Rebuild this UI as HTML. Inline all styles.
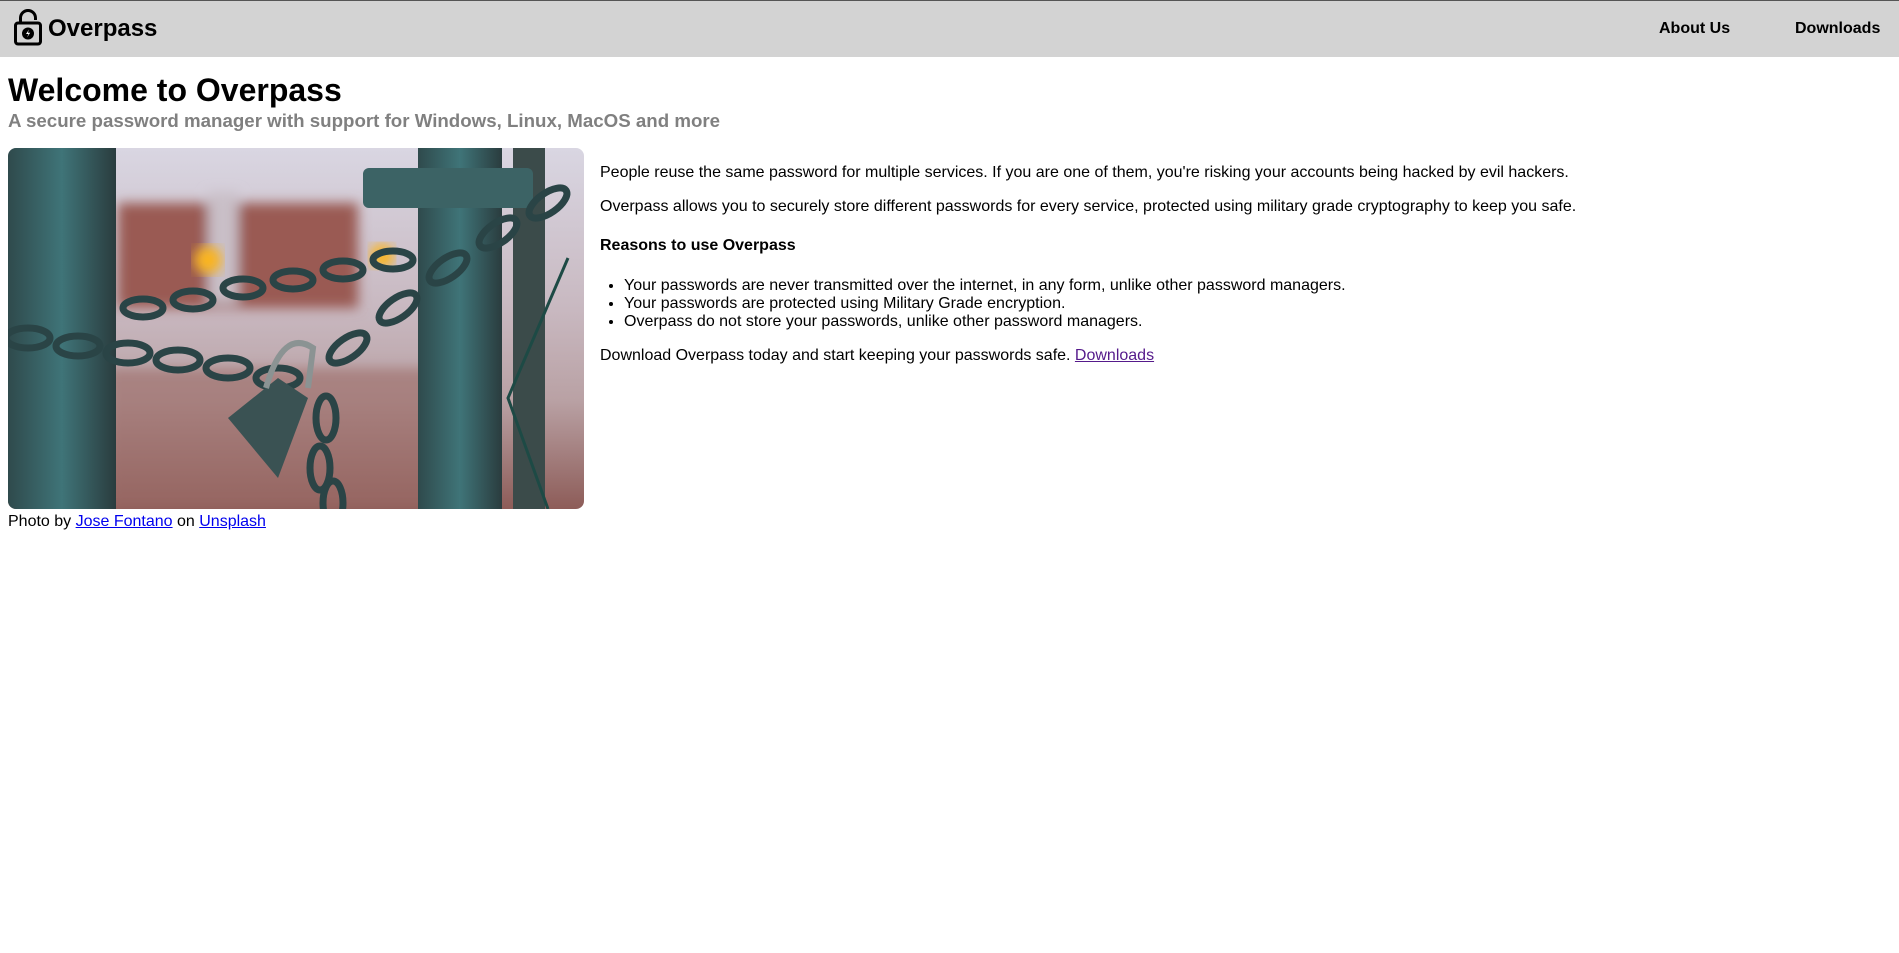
<!DOCTYPE html>
<html><head><meta charset="utf-8"><style>
*{box-sizing:border-box}
body{margin:0;width:1899px;height:953px;font-family:"Liberation Sans",Arial,sans-serif;font-size:16px;color:#000;background:#fff;position:relative;overflow:hidden}
.hdr{position:absolute;left:0;top:0;width:1899px;height:57px;background:#d3d3d3;border-top:1px solid #555}
.abs{position:absolute;white-space:nowrap}
a{color:#551a8b}
a.b{color:#0000ee}
</style></head><body>
<div class="hdr"></div>
<svg class="abs" style="left:12px;top:8px" width="32" height="40" viewBox="12 8 32 40">
<path d="M20.5 22 V18 A7.5 7.5 0 0 1 35.5 18 V20" fill="none" stroke="#000" stroke-width="3"/>
<rect x="15.5" y="23" width="25" height="21" rx="2.5" fill="none" stroke="#000" stroke-width="3"/>
<circle cx="28" cy="33.5" r="6" fill="#000"/>
<path d="M29 29.5 L26 34 H28.5 L27 37.5 L30.2 32.8 H27.8 Z" fill="#fff"/>
</svg>
<div class="abs" style="left:48px;top:15px;font-size:24px;font-weight:bold">Overpass</div>
<div class="abs" style="left:1659px;top:20px;font-weight:bold">About Us</div>
<div class="abs" style="left:1795px;top:20px;font-weight:bold">Downloads</div>
<div class="abs" style="left:8px;top:72px;font-size:32px;font-weight:bold">Welcome to Overpass</div>
<div class="abs" style="left:8px;top:110px;font-size:18.72px;font-weight:bold;color:#808080">A secure password manager with support for Windows, Linux, MacOS and more</div>
<svg class="abs" style="left:8px;top:148px;border-radius:8px" width="576" height="361" viewBox="0 0 576 361">
<defs>
<linearGradient id="bg" x1="0" y1="0" x2="0" y2="1"><stop offset="0" stop-color="#d9d6e2"/><stop offset=".45" stop-color="#c8b8c0"/><stop offset=".7" stop-color="#b9a1a4"/><stop offset="1" stop-color="#8d5c58"/></linearGradient>
<linearGradient id="post" x1="0" x2="1"><stop offset="0" stop-color="#2f4a4c"/><stop offset=".5" stop-color="#3f7478"/><stop offset="1" stop-color="#2a3c3e"/></linearGradient>
<filter id="bl"><feGaussianBlur stdDeviation="6"/></filter>
</defs>
<rect width="576" height="361" fill="url(#bg)"/>
<g filter="url(#bl)">
<rect x="110" y="55" width="240" height="105" fill="#9a5a52"/>
<rect x="200" y="45" width="30" height="110" fill="#c9bfc7"/>
<rect x="100" y="220" width="360" height="141" fill="#9b6a66" opacity=".6"/>
</g>
<circle cx="200" cy="112" r="14" fill="#fbb51e" filter="url(#bl)"/>
<circle cx="374" cy="108" r="12" fill="#fbb51e" filter="url(#bl)"/>
<rect x="0" y="0" width="108" height="361" fill="url(#post)"/>
<rect x="410" y="0" width="84" height="361" fill="url(#post)"/>
<rect x="505" y="0" width="32" height="361" fill="#3b4b4a"/>
<rect x="355" y="20" width="170" height="40" rx="6" fill="#3c6365"/>
<g fill="none" stroke="#2a4446" stroke-width="7">
<ellipse cx="20" cy="190" rx="22" ry="10"/><ellipse cx="70" cy="198" rx="22" ry="10"/><ellipse cx="120" cy="205" rx="22" ry="10"/><ellipse cx="170" cy="212" rx="22" ry="10"/><ellipse cx="220" cy="220" rx="22" ry="10"/><ellipse cx="270" cy="230" rx="22" ry="10"/>
<ellipse cx="135" cy="160" rx="20" ry="9"/><ellipse cx="185" cy="152" rx="20" ry="9"/><ellipse cx="235" cy="140" rx="20" ry="9"/><ellipse cx="285" cy="132" rx="20" ry="9"/><ellipse cx="335" cy="122" rx="20" ry="9"/><ellipse cx="385" cy="112" rx="20" ry="9"/>
<ellipse cx="340" cy="200" rx="22" ry="10" transform="rotate(-35 340 200)"/><ellipse cx="390" cy="160" rx="22" ry="10" transform="rotate(-35 390 160)"/><ellipse cx="440" cy="120" rx="22" ry="10" transform="rotate(-35 440 120)"/><ellipse cx="490" cy="85" rx="22" ry="10" transform="rotate(-35 490 85)"/><ellipse cx="540" cy="55" rx="22" ry="10" transform="rotate(-35 540 55)"/>
<ellipse cx="318" cy="270" rx="10" ry="22"/><ellipse cx="312" cy="320" rx="10" ry="22"/><ellipse cx="325" cy="355" rx="10" ry="22"/>
</g>
<path d="M220 270 L270 230 L300 250 L270 330 Z" fill="#3a5253"/>
<path d="M258 240 Q275 180 305 200 L300 240" fill="none" stroke="#8b9393" stroke-width="6"/>
<path d="M560 110 L500 250 L540 361" fill="none" stroke="#1d4a45" stroke-width="3"/>
</svg>
<div class="abs" style="left:8px;top:513px">Photo by <a class="b" href="#">Jose Fontano</a> on <a class="b" href="#">Unsplash</a></div>
<div class="abs" style="left:600px;top:164px">People reuse the same password for multiple services. If you are one of them, you're risking your accounts being hacked by evil hackers.</div>
<div class="abs" style="left:600px;top:198px">Overpass allows you to securely store different passwords for every service, protected using military grade cryptography to keep you safe.</div>
<div class="abs" style="left:600px;top:237px;font-weight:bold">Reasons to use Overpass</div>
<ul class="abs" style="left:600px;top:277px;margin:0;padding-left:24px;line-height:18px">
<li>Your passwords are never transmitted over the internet, in any form, unlike other password managers.</li>
<li>Your passwords are protected using Military Grade encryption.</li>
<li>Overpass do not store your passwords, unlike other password managers.</li>
</ul>
<div class="abs" style="left:600px;top:347px">Download Overpass today and start keeping your passwords safe. <a href="#">Downloads</a></div>
</body></html>
